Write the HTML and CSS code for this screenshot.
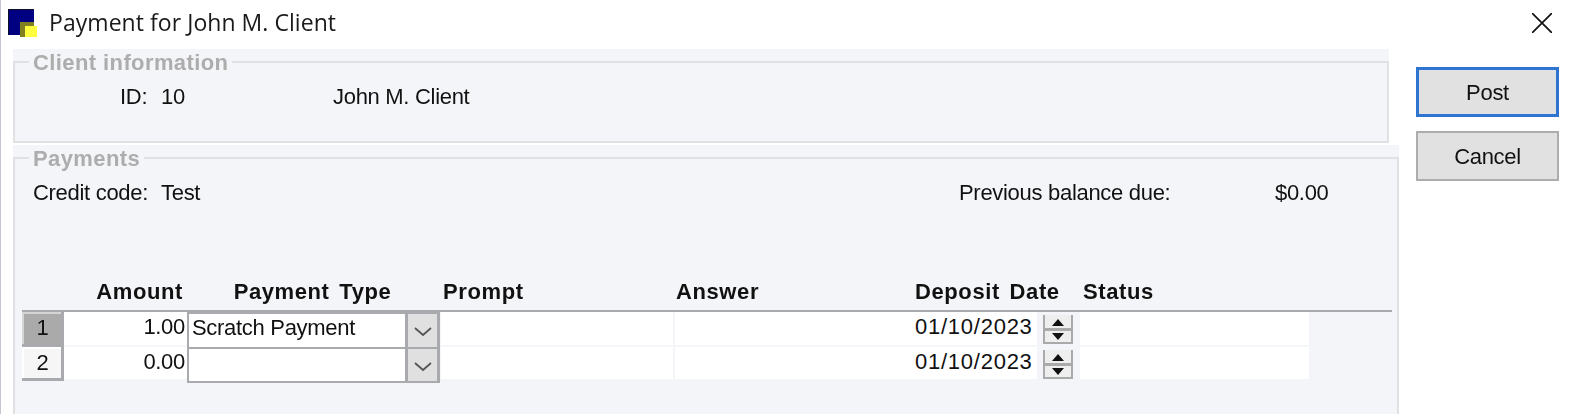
FILE: index.html
```html
<!DOCTYPE html>
<html lang="en">
<head>
<meta charset="utf-8">
<title>Payment for John M. Client</title>
<link rel="stylesheet" href="styles.css">
</head>
<body>
<div class="window">
  <header class="titlebar">
    <svg class="app-icon" width="30" height="30" viewBox="0 0 30 30">
      <rect x="0" y="1" width="26" height="26" fill="#000080"/>
      <path d="M.5 27V1.5H26" fill="none" stroke="#10102a" stroke-width="1"/>
      <rect x="12" y="14" width="14" height="15" fill="#808020"/>
      <rect x="17" y="18" width="12" height="11" fill="#ffff40"/>
    </svg>
    <h1 class="title">Payment for John M. Client</h1>
    <svg class="close" width="20" height="20" viewBox="0 0 20 20"><path d="M0 0l20 20M20 0L0 20" stroke="#111" stroke-width="1.7" fill="none"/></svg>
  </header>
  <div class="content">
    <div class="panels">
      <section class="panel panel-client">
        <div class="group group-client">
          <h2 class="legend">Client information</h2>
          <div class="client-row">
            <span class="id-label">ID:</span>
            <span class="id-value">10</span>
            <span class="client-name">John M. Client</span>
          </div>
        </div>
      </section>
      <section class="panel panel-payments">
        <div class="group group-payments">
          <h2 class="legend">Payments</h2>
          <div class="info-row">
            <span class="code-label">Credit code:</span>
            <span class="code-value">Test</span>
            <span class="balance-label">Previous balance due:</span>
            <span class="balance-value">$0.00</span>
          </div>
          <div class="grid">
            <div class="grid-head">
              <span class="corner"></span>
              <span class="th th-right">Amount</span>
              <span class="th th-center">Payment Type</span>
              <span class="th">Prompt</span>
              <span class="th">Answer</span>
              <span class="th">Deposit Date</span>
              <span class="th">Status</span>
            </div>
            <div class="grid-row">
              <span class="row-no row-no-active">1</span>
              <span class="cell amount">1.00</span>
              <span class="combo"><span class="combo-text">Scratch Payment</span><span class="combo-btn"><svg width="20" height="12" viewBox="0 0 20 12"><path d="M2 2l8 7 8-7" fill="none" stroke="#555" stroke-width="1.8"/></svg></span></span>
              <span class="cell prompt"></span>
              <span class="cell answer"></span>
              <span class="cell date">01/10/2023</span>
              <span class="spin"><svg width="30" height="29" viewBox="0 0 30 29"><path d="M1 0v28h28V0z" fill="#eee" stroke="none"/><path d="M1 0v28h28V0" fill="none" stroke="#aaa" stroke-width="2"/><path d="M1 14.500h28" stroke="#aaa" stroke-width="3"/><path d="M9 11l6-7 6 7zM9 18h12l-6 7z" fill="#111"/></svg></span>
              <span class="cell status"></span>
            </div>
            <div class="grid-row">
              <span class="row-no">2</span>
              <span class="cell amount">0.00</span>
              <span class="combo"><span class="combo-text"></span><span class="combo-btn"><svg width="20" height="12" viewBox="0 0 20 12"><path d="M2 2l8 7 8-7" fill="none" stroke="#555" stroke-width="1.8"/></svg></span></span>
              <span class="cell prompt"></span>
              <span class="cell answer"></span>
              <span class="cell date">01/10/2023</span>
              <span class="spin"><svg width="30" height="29" viewBox="0 0 30 29"><path d="M1 0v28h28V0z" fill="#eee" stroke="none"/><path d="M1 0v28h28V0" fill="none" stroke="#aaa" stroke-width="2"/><path d="M1 14.500h28" stroke="#aaa" stroke-width="3"/><path d="M9 11l6-7 6 7zM9 18h12l-6 7z" fill="#111"/></svg></span>
              <span class="cell status"></span>
            </div>
          </div>
        </div>
      </section>
    </div>
    <div class="actions">
      <button class="btn btn-default" type="button">Post</button>
      <button class="btn" type="button">Cancel</button>
    </div>
  </div>
</div>
</body>
</html>
```
FILE: styles.css
```css
* { box-sizing: border-box; }
html, body { margin: 0; height: 100%; background: #fff; overflow: hidden; }
body { font-family: "Liberation Sans", Arial, sans-serif; font-size: 22px; letter-spacing: -.3px; color: #111; }
.window { width: 1570px; height: 414px; border-left: 1px solid #c4c6cf; display: flex; flex-direction: column; filter: blur(.4px); }
.titlebar { height: 49px; flex: none; display: flex; align-items: center; padding: 0 18px 3px 7px; }
.app-icon { flex: none; margin-right: 11px; }
.title { margin: 0; font: 400 23px "Open Sans", sans-serif; letter-spacing: .05px; color: #1a1a1a; flex: 1; position: relative; top: -1px; }
.close { flex: none; }
.content { flex: 1; display: flex; padding-left: 12px; min-height: 0; }
.panels { width: 1386px; flex: none; display: flex; flex-direction: column; gap: 2px; }
.panel { background: #f4f5f8; }
.panel-client { width: 1376px; height: 94px; flex: none; padding-top: 12px; }
.panel-payments { flex: 1; padding-top: 12px; }
.group { position: relative; border: 2px solid #e0e1e3; height: 100%; }
.group-payments { border-bottom: 0; }
.legend { position: absolute; left: 14px; top: -12px; margin: 0; padding: 0 4px 0 4px; background: #f4f5f8; font-size: 22px; line-height: 24px; font-weight: 700; color: #adadad; letter-spacing: .4px; }
.client-row { display: flex; padding: 22px 0 0 105px; line-height: 24px; }
.id-label { width: 41px; }
.id-value { width: 172px; }
.info-row { display: flex; padding: 22px 0 0 18px; line-height: 24px; height: 119px; }
.code-label { width: 128px; }
.code-value { width: 798px; }
.balance-label { width: 316px; }
.grid { padding-left: 7px; }
.grid-head { display: grid; grid-template-columns: 42px 122px 257px 233px 239px 168px 300px; height: 34px; width: 1370px; align-items: center; border-bottom: 2px solid #a9aaad; }
.th { font-weight: 700; font-size: 22px; letter-spacing: .6px; word-spacing: 3px; line-height: 24px; padding-bottom: 5px; }
.th-right { text-align: right; padding-right: 3px; }
.th-center { text-align: center; padding-right: 4px; }
.grid-row { display: flex; height: 34.500px; }
.row-no { width: 42px; flex: none; background: #f6f6f6; border: solid #a9aaad; border-width: 0 3px 3px 0; box-shadow: inset 2px 2px 0 #fff; text-align: center; line-height: 32px; padding-left: 2px; }
.row-no-active { background: #aaa; box-shadow: inset 2px 2px 0 #d5d5d5; }
.cell { background: #fff; height: 32.500px; line-height: 29px; display: block; }
.amount { width: 123px; text-align: right; padding-right: 2px; }
.combo { width: 253px; flex: none; height: 34.500px; display: flex; border: solid #a9aaad; border-width: 2px 0 0 2px; background: #fff; }
.grid-row:last-child .combo { border-bottom-width: 2px; height: 36px; }
.combo-text { flex: 1; padding-left: 3px; line-height: 27px; }
.combo-btn { width: 35px; flex: none; background: #e0e0e0; border: solid #a9aaad; border-width: 0 3px; display: flex; align-items: center; justify-content: center; padding-top: 4px; }
.prompt { width: 232px; margin-left: 1px; margin-right: 2px; }
.answer { width: 237px; }
.date { width: 125px; padding-left: 3px; letter-spacing: .75px; }
.spin { width: 43px; flex: none; display: flex; padding: 3px 0 0 6px; }
.status { width: 229px; }
.actions { display: flex; flex-direction: column; gap: 14px; padding: 18px 0 0 17px; }
.btn { width: 143px; height: 50px; background: #e1e1e1; border: 2px solid #adadad; font: 22px "Liberation Sans", Arial, sans-serif; letter-spacing: -.3px; color: #111; padding: 2px 0 0; }
.btn-default { border: 3px solid #2f74d0; }
```
